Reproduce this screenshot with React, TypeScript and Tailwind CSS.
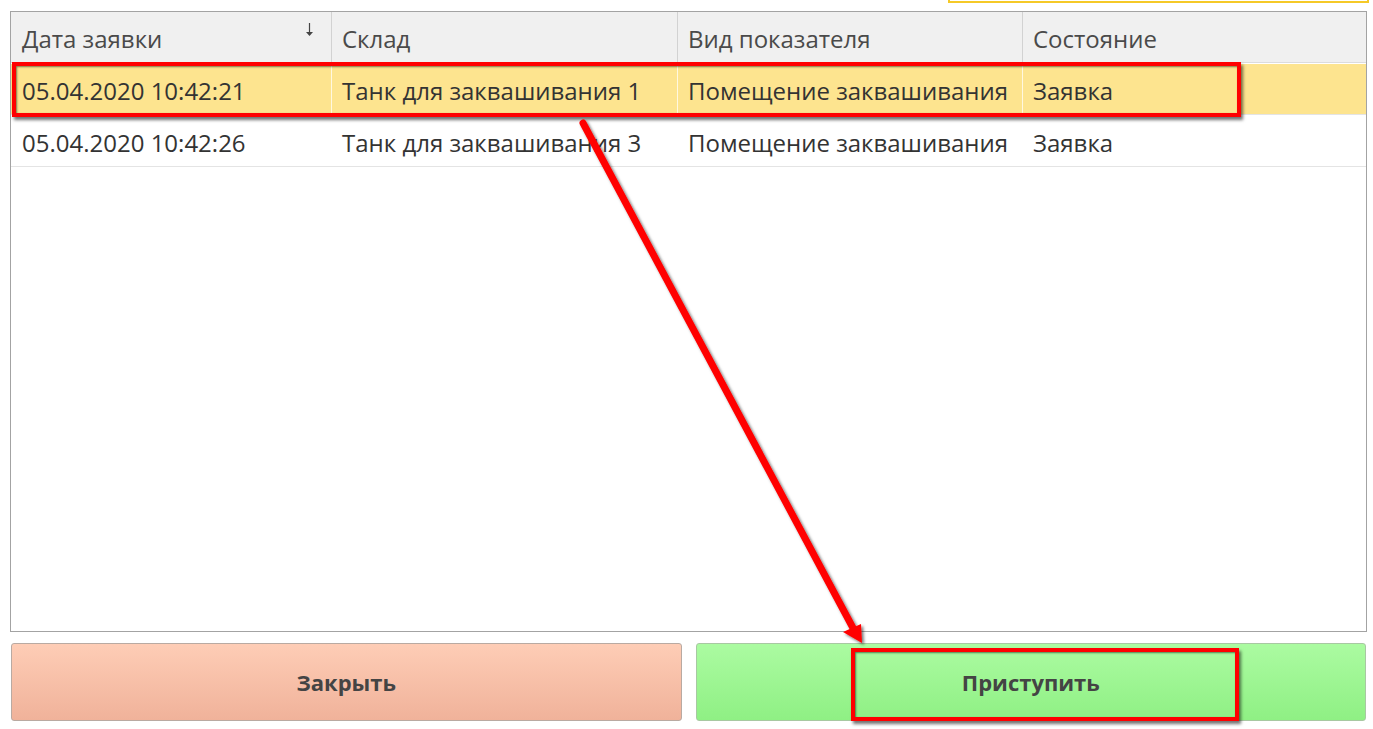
type Row = {
  date: string;
  store: string;
  kind: string;
  state: string;
  selected?: boolean;
};

const rows: Row[] = [
  {
    date: "05.04.2020 10:42:21",
    store: "Танк для заквашивания 1",
    kind: "Помещение заквашивания",
    state: "Заявка",
    selected: true,
  },
  {
    date: "05.04.2020 10:42:26",
    store: "Танк для заквашивания 3",
    kind: "Помещение заквашивания",
    state: "Заявка",
  },
];

const cols = "grid grid-cols-[321px_346px_345px_1fr]";

function SortArrow() {
  return (
    <svg className="absolute right-[17px] top-[11px]" width={9} height={14} viewBox="0 0 9 14">
      <line x1={4.5} y1={0} x2={4.5} y2={12} stroke="#444" strokeWidth={1.2} />
      <polygon points="1,9 8,9 4.5,13" fill="#444" />
    </svg>
  );
}

function Annotations() {
  return (
    <>
      {/* highlight around selected row */}
      <div className="absolute left-[12px] top-[62px] w-[1229px] h-[55px] border-[4px] border-[#ff0000] shadow-[2px_3px_3px_rgba(0,0,0,0.55),inset_1px_1px_2px_rgba(0,0,0,0.5)]" />
      {/* highlight around the start button */}
      <div className="absolute left-[851px] top-[648px] w-[388px] h-[73px] border-[4px] border-[#ff0000] shadow-[2px_3px_3px_rgba(0,0,0,0.55),inset_1px_1px_2px_rgba(0,0,0,0.5)]" />
      <svg
        className="absolute left-0 top-0 pointer-events-none"
        width={1373}
        height={729}
        viewBox="0 0 1373 729"
      >
        <defs>
          <filter id="sh" x="-10%" y="-10%" width="120%" height="120%">
            <feDropShadow dx="2" dy="2" stdDeviation="1.5" floodColor="#000" floodOpacity="0.55" />
          </filter>
        </defs>
        <g filter="url(#sh)">
          <line x1={583} y1={123} x2={853} y2={628} stroke="#ff0000" strokeWidth={7} strokeLinecap="round" />
          <polygon points="843,632 861,624 862,643" fill="#ff0000" />
        </g>
      </svg>
    </>
  );
}

export default function App() {
  return (
    <div className="relative w-[1373px] h-[729px] bg-white overflow-hidden font-['Open_Sans','Noto_Sans',sans-serif]">
      <div className="h-[11px] flex justify-end pr-[4px]">
        <div className="w-[421px] h-[3px] border-x-2 border-b-2 border-[#f5c927]" />
      </div>

      <div className="ml-[10px] mr-[6px] h-[621px] border border-[#a3a3a3] flex flex-col">
        <div className={`${cols} h-[51px] bg-[#f0f0f0] border-b border-[#dcdcdc] text-[24px] text-[#4a4a4a]`}>
          <div className="relative flex items-center pl-[11px] pt-[4px] border-r border-[#d2d2d2]">
            Дата заявки
            <SortArrow />
          </div>
          <div className="flex items-center pl-[10px] pt-[4px] border-r border-[#d2d2d2]">Склад</div>
          <div className="flex items-center pl-[10px] pt-[4px] border-r border-[#d2d2d2]">Вид показателя</div>
          <div className="flex items-center pl-[10px] pt-[4px]">Состояние</div>
        </div>

        {rows.map((r) => (
          <div
            key={r.date}
            className={`${cols} h-[52px] border-b border-[#e4e4e4] text-[24px] text-[#333] ${
              r.selected ? "bg-[#fde48f] border-t border-t-white" : "bg-white"
            }`}
          >
            <div className={`flex items-center pl-[11px] pt-[4px] ${r.selected ? "border-r border-[#fff8e0]" : ""}`}>{r.date}</div>
            <div className={`flex items-center pl-[10px] pt-[4px] ${r.selected ? "border-r border-[#fff8e0]" : ""}`}>{r.store}</div>
            <div className={`flex items-center pl-[10px] pt-[4px] whitespace-nowrap ${r.selected ? "border-r border-[#fff8e0]" : ""}`}>{r.kind}</div>
            <div className="flex items-center pl-[10px] pt-[4px]">{r.state}</div>
          </div>
        ))}
      </div>

      <div className="ml-[11px] mr-[7px] mt-[11px] grid grid-cols-2 gap-[14px] h-[78px]">
        <button className="rounded-[3px] border border-[#b9aaa2] bg-gradient-to-b from-[#fecdb6] to-[#f0b29a] text-[22px] font-bold text-[#444]">
          Закрыть
        </button>
        <button className="rounded-[3px] border border-[#a8c8a2] bg-gradient-to-b from-[#abfba1] to-[#8ff084] text-[22px] font-bold text-[#444]">
          Приступить
        </button>
      </div>

      <Annotations />
    </div>
  );
}
